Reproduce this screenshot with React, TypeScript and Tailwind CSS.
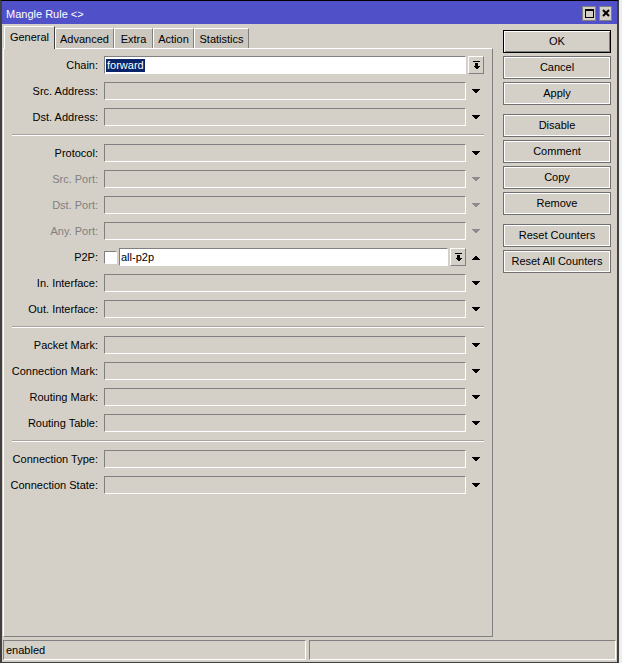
import React from 'react';

type Field = {
  label: string;
  kind: 'combo' | 'select' | 'disabled' | 'p2p';
  value?: string;
};

const groups: Field[][] = [
  [
    { label: 'Chain:', kind: 'combo', value: 'forward' },
    { label: 'Src. Address:', kind: 'select' },
    { label: 'Dst. Address:', kind: 'select' },
  ],
  [
    { label: 'Protocol:', kind: 'select' },
    { label: 'Src. Port:', kind: 'disabled' },
    { label: 'Dst. Port:', kind: 'disabled' },
    { label: 'Any. Port:', kind: 'disabled' },
    { label: 'P2P:', kind: 'p2p', value: 'all-p2p' },
    { label: 'In. Interface:', kind: 'select' },
    { label: 'Out. Interface:', kind: 'select' },
  ],
  [
    { label: 'Packet Mark:', kind: 'select' },
    { label: 'Connection Mark:', kind: 'select' },
    { label: 'Routing Mark:', kind: 'select' },
    { label: 'Routing Table:', kind: 'select' },
  ],
  [
    { label: 'Connection Type:', kind: 'select' },
    { label: 'Connection State:', kind: 'select' },
  ],
];

const tabs = [
  { name: 'Advanced', w: 'w-[59px]' },
  { name: 'Extra', w: 'w-[39px]' },
  { name: 'Action', w: 'w-[41px]' },
  { name: 'Statistics', w: 'w-[55px]' },
];

const buttonGroups = [
  ['OK', 'Cancel', 'Apply'],
  ['Disable', 'Comment', 'Copy', 'Remove'],
  ['Reset Counters', 'Reset All Counters'],
];

const Triangle = ({ up = false, color = '#000' }: { up?: boolean; color?: string }) => (
  <svg width="9" height="5" viewBox="0 0 9 5" shapeRendering="crispEdges">
    <polygon points={up ? '0,5 9,5 4.5,0.5' : '0,0 9,0 4.5,4.5'} fill={color} />
  </svg>
);

const DropButton = () => (
  <div className="w-[16px] h-[18px] flex items-center justify-center bg-[#d4d0c8] border border-t-white border-l-white border-r-[#808080] border-b-[#808080]">
    <svg width="7" height="9" viewBox="0 0 7 9" shapeRendering="crispEdges">
      <rect x="0" y="0" width="7" height="1" fill="#000" />
      <rect x="2" y="2" width="3" height="3" fill="#000" />
      <polygon points="0,5 7,5 3.5,8.5" fill="#000" />
    </svg>
  </div>
);

const sunken = 'border border-t-[#808080] border-l-[#808080] border-b-white border-r-white';

function Row({ field }: { field: Field }) {
  const disabled = field.kind === 'disabled';
  return (
    <div className="flex items-center h-[18px]">
      <div className={`w-[94px] text-right whitespace-nowrap ${disabled ? 'text-[#808080]' : 'text-black'}`}>
        {field.label}
      </div>
      <div className="ml-[6px] flex items-center w-[380px]">
        {field.kind === 'combo' && (
          <>
            <div className={`flex-1 h-[18px] bg-white ${sunken} flex items-center pl-px`}>
              <span className="bg-[#0a246a] text-white leading-[13px] px-px">{field.value}</span>
            </div>
            <div className="ml-[2px]">
              <DropButton />
            </div>
          </>
        )}
        {(field.kind === 'select' || field.kind === 'disabled') && (
          <>
            <div className={`flex-1 h-[18px] bg-[#d4d0c8] ${sunken}`} />
            <div className="w-[18px] flex items-center justify-center pl-px">
              <Triangle color={disabled ? '#8c8c8c' : '#000'} />
            </div>
          </>
        )}
        {field.kind === 'p2p' && (
          <>
            <div className={`w-[13px] h-[13px] bg-white ${sunken}`} />
            <div className={`ml-[2px] flex-1 h-[18px] bg-white ${sunken} flex items-center pl-[1px]`}>
              {field.value}
            </div>
            <div className="ml-[2px]">
              <DropButton />
            </div>
            <div className="w-[18px] flex items-center justify-center pl-px">
              <Triangle up />
            </div>
          </>
        )}
      </div>
    </div>
  );
}

export default function App() {
  return (
    <div className="w-[622px] h-[663px] bg-[#eeeeee] font-['Liberation_Sans',Arial,sans-serif] text-[11px] text-black leading-none">
      <div className="w-[619px] h-[663px] flex flex-col bg-[#d4d0c8] border-t border-l-2 border-r-2 border-b border-t-black border-l-[#404040] border-r-[#404040] border-b-[#404040]">
        {/* Title bar */}
        <div className="h-[23px] shrink-0 bg-[#5050c8] flex items-center pl-[4px] pr-[5px]">
          <span className="text-white flex-1 mt-[3px]">Mangle Rule &lt;&gt;</span>
          <div className="flex items-center gap-[3px] mt-px">
            <div className="w-[14px] h-[15px] bg-[#d4d0c8] border border-[#808080] flex items-center justify-center">
              <div className="w-[9px] h-[9px] border border-black border-t-2" />
            </div>
            <div className="w-[13px] h-[15px] bg-[#d4d0c8] border border-[#808080] flex items-center justify-center">
              <svg width="8" height="8" viewBox="0 0 8 8">
                <path d="M1 1 L7 7 M7 1 L1 7" stroke="#000" strokeWidth="2" />
              </svg>
            </div>
          </div>
        </div>

        {/* Body */}
        <div className="flex h-[613px] shrink-0">
          <div className="ml-px w-[490px] flex flex-col">
            {/* Tabs */}
            <div className="h-[24px] flex items-end pl-px">
              <div className="relative z-10 -mb-px w-[51px] h-[23px] bg-[#d4d0c8] border-l border-t border-r border-l-white border-t-white border-r-[#404040] flex items-center justify-center pb-px">
                General
              </div>
              {tabs.map((t) => (
                <div
                  key={t.name}
                  className={`${t.w} h-[20px] bg-[#cbc7bf] border-l border-t border-r border-l-white border-t-white border-r-[#808080] flex items-center justify-center pt-[2px]`}
                >
                  {t.name}
                </div>
              ))}
            </div>

            {/* Panel */}
            <div className="h-[589px] border border-l-white border-t-white border-r-[#808080] border-b-[#808080] pt-[7px]">
              {groups.map((g, gi) => (
                <div key={gi}>
                  {gi > 0 && <div className="mx-[8px] my-[8px] h-[2px] border-t border-b border-t-[#a8a49c] border-b-white" />}
                  <div className="flex flex-col gap-[8px]">
                    {g.map((f) => (
                      <Row key={f.label} field={f} />
                    ))}
                  </div>
                </div>
              ))}
            </div>
          </div>

          {/* Buttons */}
          <div className="ml-[10px] w-[108px] pt-[6px] flex flex-col gap-[9px]">
            {buttonGroups.map((bg, i) => (
              <div key={i} className="flex flex-col gap-[3px]">
                {bg.map((b) => (
                  <div
                    key={b}
                    className={`h-[23px] flex items-center justify-center bg-[#d4d0c8] border ${
                      b === 'OK'
                        ? 'border-black shadow-[inset_1px_1px_0_#ffffff,inset_-1px_-1px_0_#808080]'
                        : 'border-[#6f6f6f] shadow-[inset_1px_1px_0_#ffffff,inset_-1px_-1px_0_#ffffff]'
                    }`}
                  >
                    {b}
                  </div>
                ))}
              </div>
            ))}
          </div>
        </div>

        {/* Status bar */}
        <div className="mt-[3px] h-[20px] shrink-0 flex gap-[3px] pl-px">
          <div className={`w-[303px] h-[20px] ${sunken} flex items-center pl-[2px]`}>enabled</div>
          <div className={`w-[307px] h-[20px] ${sunken}`} />
        </div>
      </div>
    </div>
  );
}
